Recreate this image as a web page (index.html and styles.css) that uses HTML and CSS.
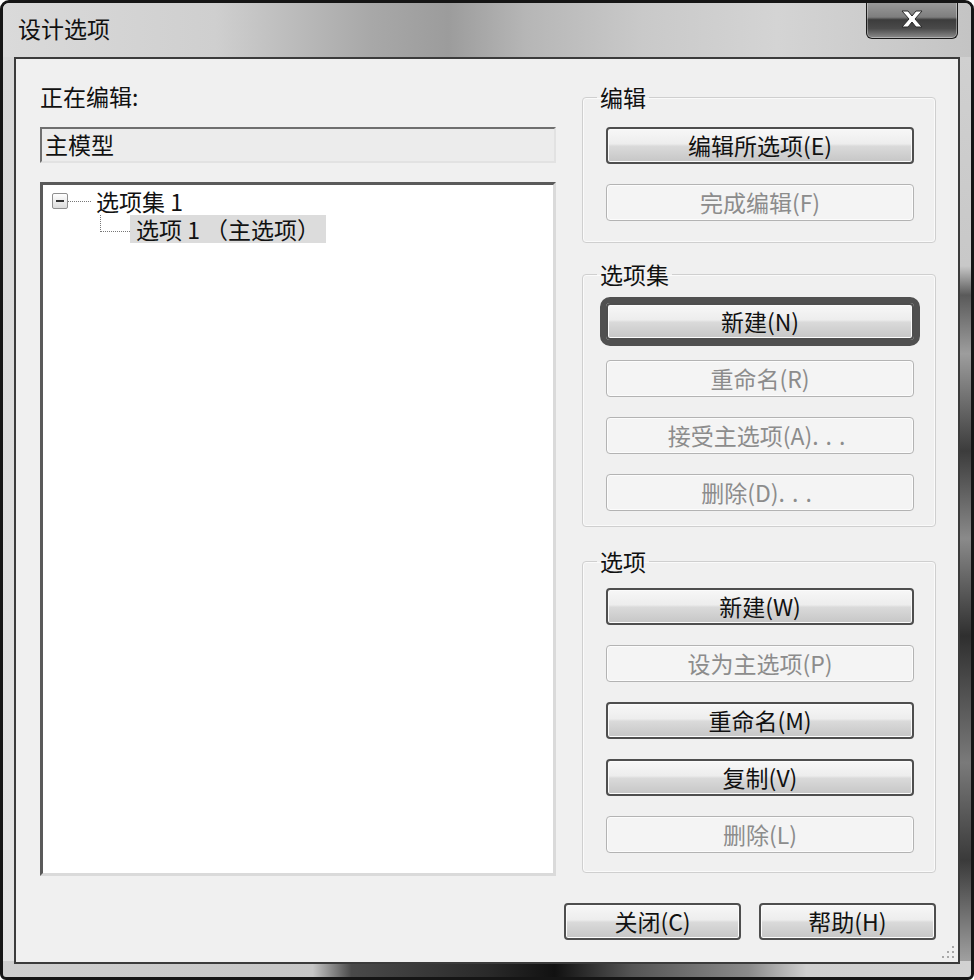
FILE: index.html
```html
<!DOCTYPE html>
<html lang="zh-CN">

<head>
    <meta charset="UTF-8">
    <meta name="viewport" content="width=device-width, initial-scale=1.0">
    <title>设计选项</title>
    <link rel="stylesheet" href="styles.css">
</head>

<body>
    <div class="window">
        <!-- Title bar -->
        <div class="titlebar">
            <span class="title">设计选项</span>
            <button class="close-btn" title="关闭">
                <svg width="22" height="18" viewBox="0 0 22 18">
                    <path d="M1 1h6l4 5 4-5h6l-7 8 7 8h-6l-4-5-4 5H1l7-8z" fill="#fff" stroke="#2a2a2a" stroke-width="1" />
                </svg>
            </button>
        </div>

        <div class="client">
            <div class="main">
                <div class="left-col">
                    <div class="label">正在编辑:</div>
                    <div class="textbox">主模型</div>
                    <div class="tree">
                        <div class="tree-row">
                            <span class="expander"></span>
                            <span class="dots"></span>
                            <span class="node">选项集 1</span>
                        </div>
                        <div class="tree-row child">
                            <span class="branch"></span>
                            <span class="node selected">选项 1 （主选项）</span>
                        </div>
                    </div>
                </div>

                <div class="right-col">
                    <fieldset class="group g-edit">
                        <legend>编辑</legend>
                        <div class="btns">
                            <button class="btn">编辑所选项(E)</button>
                            <button class="btn" disabled>完成编辑(F)</button>
                        </div>
                    </fieldset>

                    <fieldset class="group g-set">
                        <legend>选项集</legend>
                        <div class="btns">
                            <button class="btn default">新建(N)</button>
                            <button class="btn" disabled>重命名(R)</button>
                            <button class="btn" disabled>接受主选项(A)<span class="ell">...</span></button>
                            <button class="btn" disabled>删除(D)<span class="ell">...</span></button>
                        </div>
                    </fieldset>

                    <fieldset class="group g-opt">
                        <legend>选项</legend>
                        <div class="btns">
                            <button class="btn">新建(W)</button>
                            <button class="btn" disabled>设为主选项(P)</button>
                            <button class="btn">重命名(M)</button>
                            <button class="btn">复制(V)</button>
                            <button class="btn" disabled>删除(L)</button>
                        </div>
                    </fieldset>
                </div>
            </div>

            <div class="footer">
                <button class="btn wide">关闭(C)</button>
                <button class="btn wide">帮助(H)</button>
            </div>

            <svg class="grip" width="14" height="14" viewBox="0 0 14 14" fill="#a8a8a8">
                <rect x="11" y="1" width="2" height="2" />
                <rect x="11" y="6" width="2" height="2" />
                <rect x="6" y="6" width="2" height="2" />
                <rect x="11" y="11" width="2" height="2" />
                <rect x="6" y="11" width="2" height="2" />
                <rect x="1" y="11" width="2" height="2" />
            </svg>
        </div>
    </div>
</body>

</html>
```

FILE: styles.css
```css
body {
    margin: 0;
    width: 974px;
    height: 980px;
    background: #fff;
    font-family: "Noto Sans CJK SC", "Liberation Sans", sans-serif;
    color: #111;
}

.window {
    box-sizing: border-box;
    width: 974px;
    height: 980px;
    border: 3px solid #151515;
    border-radius: 9px 9px 6px 6px;
    display: flex;
    flex-direction: column;
    overflow: hidden;
    background:
        linear-gradient(90deg, #cfcfcf 0%, #c6c6c6 32%, #4a4a4a 36%, #2a2a2a 50%, #111 57%, #555 65%, #8a8a8a 77%, #cfcfcf 83%, #d2d2d2 100%) bottom / 100% 16px no-repeat,
        linear-gradient(180deg, #d2d2d2 0%, #c8c8c8 27%, #5a5a5a 30%, #9d9d9d 36%, #3c3c3c 46%, #8a8a8a 55%, #2f2f2f 65%, #7a7a7a 78%, #3a3a3a 88%, #b0b0b0 100%) right / 13px 100% no-repeat,
        linear-gradient(180deg, #d6d6d6, #e4e4e4);
}

/* title bar */
.titlebar {
    height: 54px;
    display: flex;
    justify-content: space-between;
    align-items: flex-start;
    background: linear-gradient(90deg, #dadada 0%, #cfcfcf 22%, #a8a8a8 38%, #9c9c9c 46%, #b6b6b6 54%, #c9c9c9 66%, #d4d4d4 80%, #c4c4c4 100%);
}

.title {
    margin: 11px 0 0 15px;
    font-size: 23px;
    line-height: 28px;
}

.close-btn {
    margin: -3px 13px 0 0;
    width: 92px;
    height: 39px;
    padding: 0;
    border: 1px solid #1a1a1a;
    border-top: 0;
    border-radius: 0 0 6px 6px;
    background: linear-gradient(180deg, #a0a0a0 0%, #7e7e7e 45%, #3c3c3c 52%, #4a4a4a 75%, #8c8c8c 100%);
    box-shadow: inset 0 0 0 1px rgba(255, 255, 255, 0.35);
    display: flex;
    align-items: center;
    justify-content: center;
}

/* client area */
.client {
    position: relative;
    flex: 1;
    margin: 0 11px 13px 11px;
    border: 2px solid #3b3b3b;
    background: #f0f0f0;
    padding: 22px 22px 0 24px;
    display: flex;
    flex-direction: column;
}

.main {
    display: flex;
    gap: 26px;
}

.left-col {
    width: 516px;
}

.right-col {
    width: 354px;
}

.label {
    font-size: 23px;
    line-height: 30px;
}

.textbox {
    margin-top: 16px;
    height: 36px;
    box-sizing: border-box;
    border: 2px solid;
    border-color: #6f6f6f #e2e2e2 #e2e2e2 #6f6f6f;
    background: #ececec;
    font-size: 23px;
    line-height: 31px;
    padding-left: 3px;
}

.tree {
    margin-top: 19px;
    height: 694px;
    box-sizing: border-box;
    border: 3px solid;
    border-color: #5a5a5a #dadada #dadada #5a5a5a;
    background: #fff;
    padding-top: 2px;
}

.tree-row {
    display: flex;
    align-items: center;
    height: 28px;
    font-size: 23px;
}

.expander {
    margin-left: 9px;
    width: 16px;
    height: 16px;
    box-sizing: border-box;
    border: 1px solid #8f8f8f;
    border-radius: 2px;
    background: linear-gradient(#fff, #dcdcdc);
    display: flex;
    align-items: center;
    justify-content: center;
}

.expander::before {
    content: "";
    width: 8px;
    height: 2px;
    background: #333;
}

.dots {
    width: 23px;
    border-top: 1px dotted #777;
}

.node {
    padding: 0 5px;
    line-height: 28px;
}

.branch {
    align-self: flex-start;
    margin-left: 57px;
    width: 30px;
    height: 17px;
    box-sizing: border-box;
    border-left: 1px dotted #777;
    border-bottom: 1px dotted #777;
}

.selected {
    padding: 0 6px;
    background: #dcdcdc;
}

/* group boxes */
.group {
    margin: 4px 0 0;
    border: 1px solid #cfcfcf;
    border-radius: 4px;
    box-shadow: inset 0 0 0 1px #fafafa;
    min-width: 0;
}

.group legend {
    font-size: 23px;
    line-height: 24px;
    padding: 0 3px;
    margin-left: -9px;
}

.g-edit {
    padding: 18px 21px 21px 23px;
}

.g-set {
    margin-top: 19px;
    padding: 17px 21px 15px 23px;
}

.g-opt {
    margin-top: 22px;
    padding: 15px 21px 19px 23px;
}

.btns {
    display: flex;
    flex-direction: column;
    gap: 20px;
}

/* buttons */
.btn {
    display: block;
    width: 100%;
    height: 37px;
    padding: 0;
    font-family: "Noto Sans CJK SC", "Liberation Sans", sans-serif;
    font-size: 23px;
    line-height: 1;
    color: #111;
    border: 2px solid #4e4e4e;
    border-radius: 4px;
    background: linear-gradient(180deg, #f7f7f7 0%, #ededed 45%, #dadada 52%, #c6c6c6 100%);
    box-shadow: inset 0 0 0 1px #fbfbfb;
}

.btn:disabled {
    border: 1px solid #b3b3b3;
    background: #f4f4f4;
    color: #8c8c8c;
    box-shadow: inset 0 0 0 1px #fcfcfc;
}

.btn.default {
    outline: 6px solid #505050;
}

.ell {
    letter-spacing: 7px;
}

.footer {
    display: flex;
    justify-content: flex-end;
    gap: 18px;
    margin-top: 27px;
}

.footer .wide {
    width: 177px;
}

.grip {
    position: absolute;
    right: 3px;
    bottom: 3px;
}
```
